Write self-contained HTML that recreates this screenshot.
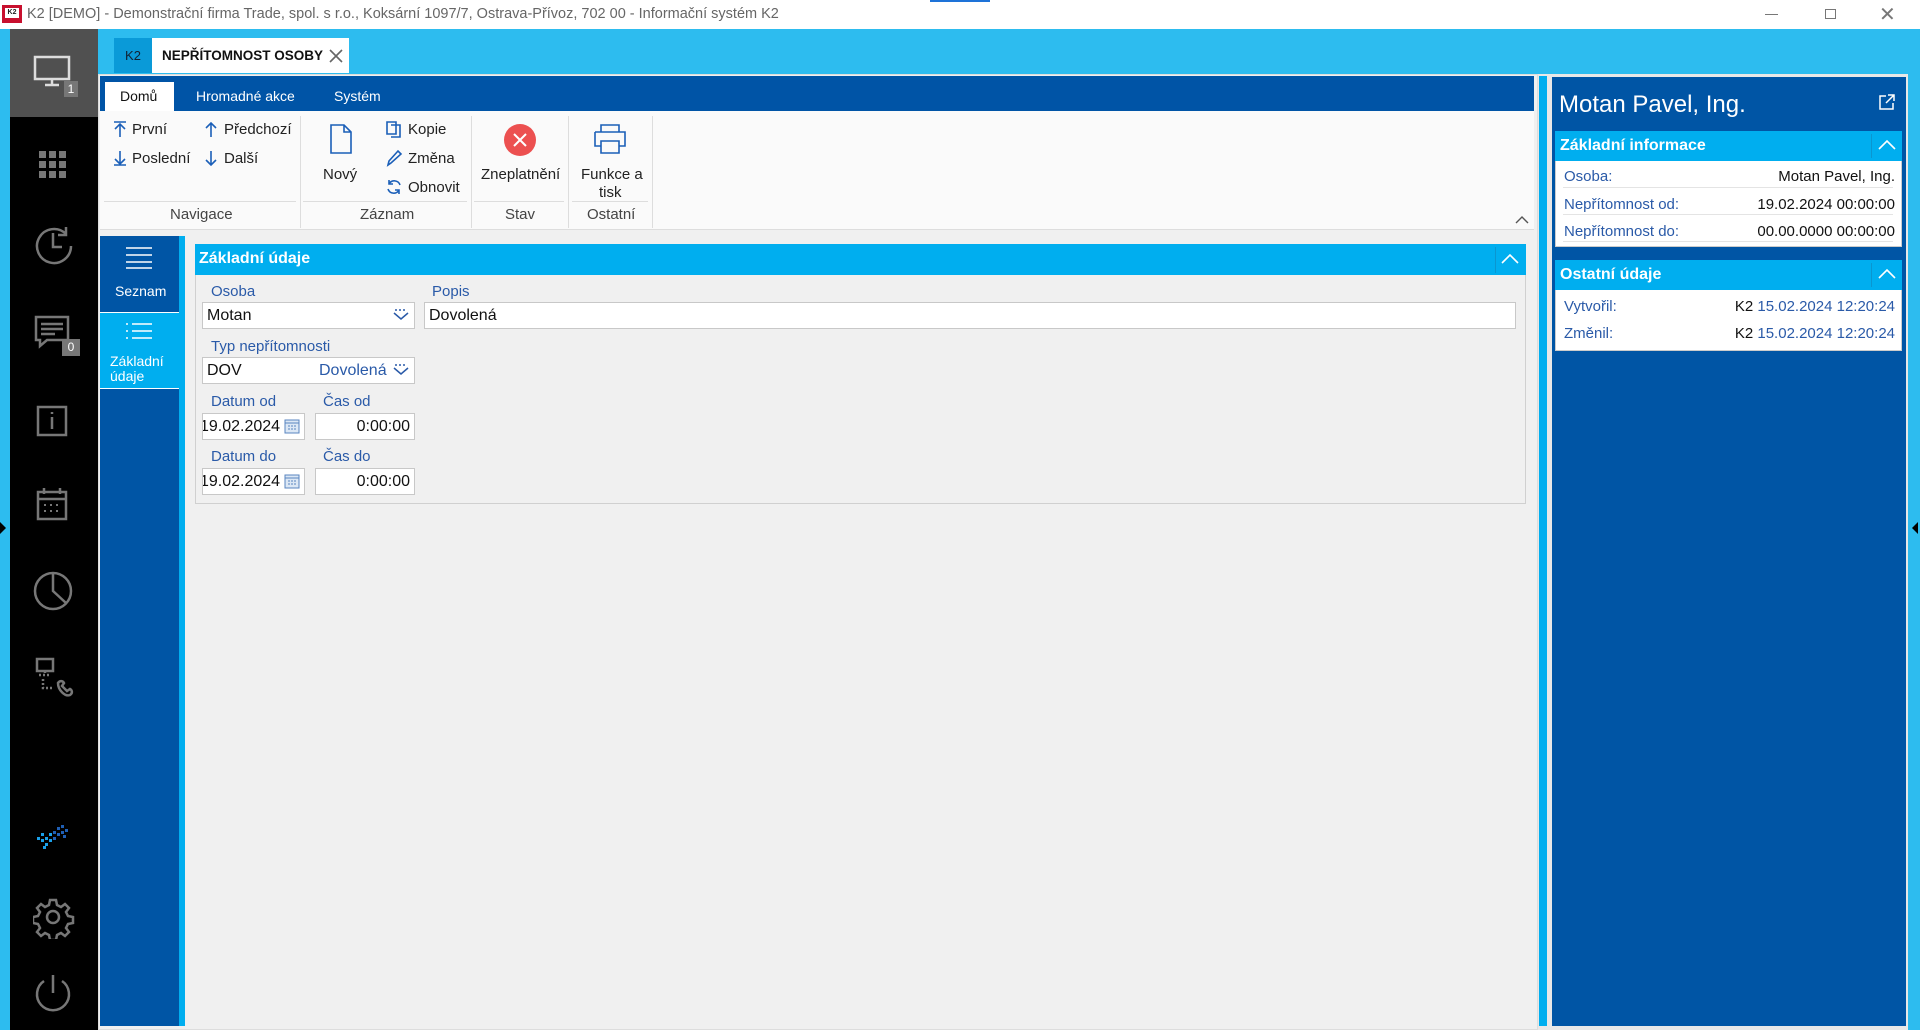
<!DOCTYPE html>
<html><head><meta charset="utf-8">
<style>
*{margin:0;padding:0;box-sizing:border-box}
body{width:1920px;height:1030px;overflow:hidden;background:#2dbcef;font-family:"Liberation Sans","DejaVu Sans",sans-serif;position:relative}
.a{position:absolute}
.t{position:absolute;white-space:nowrap}
.lbl{color:#2a5aa8;font-size:15px}
.inp{position:absolute;background:#fff;border:1px solid #c8c8c8;font-size:16px;color:#111;padding:4px 4px;height:27px;line-height:18px;overflow:hidden}
.rb{font-size:15px;color:#222}
.ico{stroke:#1b5fb8;fill:none;stroke-width:1.6}
.side svg{position:absolute;left:23px}
</style></head><body>
<!-- title bar -->
<div class="a" style="left:0;top:0;width:1920px;height:29px;background:#fff"></div>
<div class="a" style="left:2px;top:5px;width:20px;height:18px;background:#c8102e"></div>
<div class="a" style="left:5px;top:8px;width:14px;height:10px;background:#fff;font-size:7px;font-weight:bold;color:#222;line-height:10px;text-align:center">K2</div>
<div class="t" style="left:27px;top:6px;font-size:14.5px;color:#666">K2 [DEMO] - Demonstrační firma Trade, spol. s r.o., Koksární 1097/7, Ostrava-Přívoz, 702 00 - Informační systém K2</div>
<div class="a" style="left:930px;top:0;width:60px;height:2px;background:#1e73d8"></div>
<div class="a" style="left:1765px;top:14px;width:13px;height:1px;background:#777"></div>
<div class="a" style="left:1825px;top:9px;width:11px;height:10px;border:1px solid #777"></div>
<div class="t" style="left:1879px;top:2px;font-size:20px;color:#777">✕</div>

<!-- left sidebar -->
<div class="a side" style="left:10px;top:29px;width:88px;height:1001px;background:#000">
 <div class="a" style="left:0;top:0;width:88px;height:88px;background:#505050"></div>
 <svg style="top:26px" width="40" height="36" viewBox="0 0 40 36"><rect x="2" y="2" width="34" height="22" fill="none" stroke="#ddd" stroke-width="2.5"/><path d="M19 24v6M12 30h14" stroke="#ddd" stroke-width="2.5"/></svg>
 <div class="a" style="left:54px;top:52px;width:14px;height:16px;background:#777;color:#fff;font-size:12px;text-align:center;line-height:16px">1</div>
 <svg style="top:116px" width="40" height="40" viewBox="0 0 40 40" fill="#777"><rect x="6" y="6" width="7" height="7"/><rect x="16" y="6" width="7" height="7"/><rect x="26" y="6" width="7" height="7"/><rect x="6" y="16" width="7" height="7"/><rect x="16" y="16" width="7" height="7"/><rect x="26" y="16" width="7" height="7"/><rect x="6" y="26" width="7" height="7"/><rect x="16" y="26" width="7" height="7"/><rect x="26" y="26" width="7" height="7"/></svg>
 <svg style="top:195px" width="42" height="42" viewBox="0 0 42 42" fill="none" stroke="#777" stroke-width="2.5"><path d="M33 10A17 17 0 1 0 38 22"/><path d="M20 9v14h9"/><path d="M33 3v8h-8"/></svg>
 <svg style="top:285px" width="42" height="40" viewBox="0 0 42 40" fill="none" stroke="#777" stroke-width="2.5"><path d="M3 3h32v23H14l-7 6v-6H3z"/><path d="M8 10h22M8 15h22M8 20h14"/></svg>
 <div class="a" style="left:52px;top:310px;width:18px;height:17px;background:#777;color:#fff;font-size:12px;text-align:center;line-height:17px">0</div>
 <svg style="top:373px" width="40" height="40" viewBox="0 0 40 40" fill="none" stroke="#777" stroke-width="2.5"><rect x="5" y="5" width="28" height="28"/><path d="M19 15v12M19 10v2"/></svg>
 <svg style="top:456px" width="40" height="40" viewBox="0 0 40 40" fill="none" stroke="#777" stroke-width="2.5"><rect x="5" y="7" width="28" height="27"/><path d="M5 14h28M11 3v6M27 3v6"/><path d="M11 20h2M17 20h2M23 20h2M11 26h2M17 26h2M23 26h2" stroke-width="2"/></svg>
 <svg style="top:540px" width="44" height="44" viewBox="0 0 44 44" fill="none" stroke="#777" stroke-width="2.5"><circle cx="20" cy="22" r="18"/><path d="M20 4v18l13 12"/></svg>
 <svg style="top:627px" width="44" height="44" viewBox="0 0 44 44" fill="none" stroke="#777" stroke-width="2.5"><rect x="4" y="3" width="16" height="12"/><path d="M12 15v4M6 19h12M10 23v9h10" stroke-dasharray="2 2"/><path d="M25 27c2-3 5-2 6 0l-2 3 5 5 3-2c2 1 3 4 0 6-5 2-12-5-12-12z"/></svg>
 <svg style="top:790px" width="44" height="40" viewBox="0 0 44 40"><g fill="#1aa0ea"><rect x="4" y="18" width="3" height="3"/><rect x="8" y="14" width="3" height="3"/><rect x="8" y="20" width="3" height="3"/><rect x="12" y="18" width="3" height="3"/><rect x="12" y="24" width="3" height="3"/><rect x="16" y="14" width="3" height="3"/><rect x="16" y="20" width="3" height="3"/><rect x="10" y="27" width="3" height="3"/></g><g fill="#1f5fb5"><rect x="20" y="12" width="3" height="3"/><rect x="24" y="8" width="3" height="3"/><rect x="24" y="14" width="3" height="3"/><rect x="28" y="6" width="3" height="3"/><rect x="28" y="12" width="3" height="3"/><rect x="32" y="10" width="3" height="3"/><rect x="20" y="18" width="3" height="3"/><rect x="30" y="16" width="3" height="3"/></g></svg>
 <svg style="top:866px" width="44" height="44" viewBox="0 0 44 44" fill="none" stroke="#777" stroke-width="2.5"><circle cx="20" cy="22" r="6"/><path d="M17 5h6l1 5 4 2 4-3 4 4-3 4 2 4 5 1v6l-5 1-2 4 3 4-4 4-4-3-4 2-1 5h-6l-1-5-4-2-4 3-4-4 3-4-2-4-5-1v-6l5-1 2-4-3-4 4-4 4 3 4-2z"/></svg>
 <svg style="top:942px" width="44" height="44" viewBox="0 0 44 44" fill="none" stroke="#777" stroke-width="2.5"><path d="M20 4v18"/><path d="M11 10a16 16 0 1 0 18 0"/></svg>
</div>
<div class="a" style="left:0;top:522px;width:0;height:0;border-top:6px solid transparent;border-bottom:6px solid transparent;border-left:6px solid #000"></div>
<div class="a" style="left:1912px;top:522px;width:0;height:0;border-top:6px solid transparent;border-bottom:6px solid transparent;border-right:6px solid #000"></div>

<!-- tabs -->
<div class="a" style="left:114px;top:38px;width:38px;height:35px;background:#0a9ad8;color:#123;font-size:13px;text-align:center;line-height:35px">K2</div>
<div class="a" style="left:152px;top:38px;width:197px;height:35px;background:#fff"></div>
<div class="t" style="left:162px;top:48px;font-size:13.5px;font-weight:bold;color:#111">NEPŘÍTOMNOST OSOBY</div>
<svg class="a" style="left:329px;top:49px" width="14" height="14"><path d="M1 1l12 12M13 1L1 13" stroke="#666" stroke-width="1.6"/></svg>

<!-- main frame -->
<div class="a" style="left:98px;top:74px;width:1440px;height:956px;background:#f0f0f0;border:1px solid #ddd"></div>
<div class="a" style="left:100px;top:76px;width:1434px;height:35px;background:#0054a6"></div>
<div class="a" style="left:105px;top:82px;width:69px;height:29px;background:#fff"></div>
<div class="t" style="left:120px;top:88px;font-size:14px;color:#111">Domů</div>
<div class="t" style="left:196px;top:88px;font-size:14px;color:#fff">Hromadné akce</div>
<div class="t" style="left:334px;top:88px;font-size:14px;color:#fff">Systém</div>
<div class="a" style="left:100px;top:111px;width:1434px;height:119px;background:#fafafa;border-bottom:1px solid #ddd"></div>
<!-- ribbon -->
<div class="a" style="left:104px;top:201px;width:192px;height:1px;background:#ddd"></div>
<div class="a" style="left:303px;top:201px;width:164px;height:1px;background:#ddd"></div>
<div class="a" style="left:474px;top:201px;width:90px;height:1px;background:#ddd"></div>
<div class="a" style="left:572px;top:201px;width:76px;height:1px;background:#ddd"></div>
<div class="a" style="left:300px;top:116px;width:1px;height:112px;background:#ddd"></div>
<div class="a" style="left:471px;top:116px;width:1px;height:112px;background:#ddd"></div>
<div class="a" style="left:568px;top:116px;width:1px;height:112px;background:#ddd"></div>
<div class="a" style="left:652px;top:116px;width:1px;height:112px;background:#ddd"></div>
<svg class="a" style="left:112px;top:120px" width="16" height="18"><path class="ico" d="M2 2h12M8 4v13M3 9l5-5 5 5"/></svg>
<div class="t rb" style="left:132px;top:121px">První</div>
<svg class="a" style="left:112px;top:149px" width="16" height="18"><path class="ico" d="M2 16h12M8 2v13M3 10l5 5 5-5"/></svg>
<div class="t rb" style="left:132px;top:150px">Poslední</div>
<svg class="a" style="left:203px;top:120px" width="16" height="18"><path class="ico" d="M8 3v14M3 8l5-5 5 5"/></svg>
<div class="t rb" style="left:224px;top:121px">Předchozí</div>
<svg class="a" style="left:203px;top:149px" width="16" height="18"><path class="ico" d="M8 2v14M3 11l5 5 5-5"/></svg>
<div class="t rb" style="left:224px;top:150px">Další</div>
<div class="t rb" style="left:170px;top:206px;color:#444">Navigace</div>
<svg class="a" style="left:328px;top:123px" width="26" height="32"><path class="ico" d="M3 2h13l7 7v21H3z M16 2v7h7" stroke-width="2"/></svg>
<div class="t rb" style="left:323px;top:166px">Nový</div>
<svg class="a" style="left:385px;top:120px" width="18" height="18"><path class="ico" d="M2 2h9v12H2z M6 5h9v12H6"/></svg>
<div class="t rb" style="left:408px;top:121px">Kopie</div>
<svg class="a" style="left:385px;top:149px" width="18" height="18"><path class="ico" d="M3 16l1-4 9-10 3 3-10 9z"/></svg>
<div class="t rb" style="left:408px;top:150px">Změna</div>
<svg class="a" style="left:385px;top:178px" width="18" height="18"><path class="ico" d="M15 7A6 6 0 0 0 4 6M3 11a6 6 0 0 0 11 1M4 2v4h4M14 16v-4h-4"/></svg>
<div class="t rb" style="left:408px;top:179px">Obnovit</div>
<div class="t rb" style="left:360px;top:206px;color:#444">Záznam</div>
<svg class="a" style="left:503px;top:123px" width="34" height="34"><circle cx="17" cy="17" r="16" fill="#ec5050"/><path d="M11 11l12 12M23 11l-12 12" stroke="#fff" stroke-width="2"/></svg>
<div class="t rb" style="left:481px;top:166px">Zneplatnění</div>
<div class="t rb" style="left:505px;top:206px;color:#444">Stav</div>
<svg class="a" style="left:592px;top:123px" width="36" height="32"><path class="ico" stroke-width="2.2" d="M9 9V2h18v7M3 9h30v14h-6M9 23H3V9M9 18h18v12H9z"/></svg>
<div class="t rb" style="left:581px;top:166px">Funkce a</div>
<div class="t rb" style="left:599px;top:184px">tisk</div>
<div class="t rb" style="left:587px;top:206px;color:#444">Ostatní</div>
<svg class="a" style="left:1515px;top:215px" width="14" height="9"><path d="M1 8l6-6 6 6" stroke="#555" stroke-width="1.4" fill="none"/></svg>

<!-- left nav -->
<div class="a" style="left:100px;top:236px;width:79px;height:790px;background:#0055a5"></div>
<div class="a" style="left:179px;top:236px;width:6px;height:790px;background:#00aeef"></div>
<svg class="a" style="left:125px;top:246px" width="28" height="24"><path d="M1 2h26M1 9h26M1 16h26M1 22h26" stroke="#fff" stroke-width="1.5"/></svg>
<div class="t" style="left:115px;top:283px;font-size:14px;color:#fff">Seznam</div>
<div class="a" style="left:100px;top:312px;width:79px;height:77px;background:#00aeef;border-top:1px solid #fff;border-bottom:1px solid #fff"></div>
<svg class="a" style="left:125px;top:322px" width="28" height="18"><path d="M1 2h2M1 9h2M1 16h2M7 2h20M7 9h20M7 16h20" stroke="#fff" stroke-width="1.5"/></svg>
<div class="t" style="left:110px;top:354px;font-size:14px;color:#fff;line-height:15px">Základní<br>údaje</div>

<!-- content -->
<div class="a" style="left:195px;top:244px;width:1331px;height:260px;border:1px solid #d0d0d0;background:#f0f0f0"></div>
<div class="a" style="left:195px;top:244px;width:1331px;height:31px;background:#00aeef"></div>
<div class="t" style="left:199px;top:250px;font-size:16px;font-weight:bold;color:#fff">Základní údaje</div>
<div class="a" style="left:1495px;top:247px;width:1px;height:26px;background:#0a96d0"></div>
<svg class="a" style="left:1500px;top:252px" width="20" height="14"><path d="M2 11l8-8 8 8" stroke="#fff" stroke-width="1.6" fill="none"/></svg>
<div class="t lbl" style="left:211px;top:283px">Osoba</div>
<div class="inp" style="left:202px;top:302px;width:213px">Motan</div>
<svg class="a" style="left:393px;top:309px" width="16" height="12"><path d="M2 1h2M6 1h2M10 1h2M1 4l7 6 7-6" stroke="#2a5aa8" stroke-width="1.5" fill="none"/></svg>
<div class="t lbl" style="left:432px;top:283px">Popis</div>
<div class="inp" style="left:424px;top:302px;width:1092px">Dovolená</div>
<div class="t lbl" style="left:211px;top:338px">Typ nepřítomnosti</div>
<div class="inp" style="left:202px;top:357px;width:213px">DOV<span style="position:absolute;left:116px;color:#2a5aa8">Dovolená</span></div>
<svg class="a" style="left:393px;top:364px" width="16" height="12"><path d="M2 1h2M6 1h2M10 1h2M1 4l7 6 7-6" stroke="#2a5aa8" stroke-width="1.5" fill="none"/></svg>
<div class="t lbl" style="left:211px;top:393px">Datum od</div>
<div class="t lbl" style="left:323px;top:393px">Čas od</div>
<div class="inp" style="left:202px;top:413px;width:103px;text-indent:-7px">19.02.2024</div>
<div class="inp" style="left:315px;top:413px;width:100px;text-align:right">0:00:00</div>
<div class="t lbl" style="left:211px;top:448px">Datum do</div>
<div class="t lbl" style="left:323px;top:448px">Čas do</div>
<div class="inp" style="left:202px;top:468px;width:103px;text-indent:-7px">19.02.2024</div>
<div class="inp" style="left:315px;top:468px;width:100px;text-align:right">0:00:00</div>
<svg class="a" style="left:284px;top:418px" width="16" height="16"><rect x="0" y="0" width="16" height="16" fill="#fff"/><rect x="1" y="2" width="14" height="13" fill="#dbe7f5" stroke="#5a85c0"/><path d="M1 5h14" stroke="#5a85c0"/><path d="M4 8h2M7 8h2M10 8h2M4 11h2M7 11h2M10 11h2" stroke="#5a85c0"/></svg>
<svg class="a" style="left:284px;top:473px" width="16" height="16"><rect x="0" y="0" width="16" height="16" fill="#fff"/><rect x="1" y="2" width="14" height="13" fill="#dbe7f5" stroke="#5a85c0"/><path d="M1 5h14" stroke="#5a85c0"/><path d="M4 8h2M7 8h2M10 8h2M4 11h2M7 11h2M10 11h2" stroke="#5a85c0"/></svg>

<!-- splitter -->
<div class="a" style="left:1538px;top:74px;width:12px;height:956px;background:#e8e8e8"></div>
<div class="a" style="left:1539px;top:76px;width:8px;height:950px;background:#00aeef"></div>

<!-- right panel -->
<div class="a" style="left:1550px;top:74px;width:358px;height:956px;background:#e8e8e8"></div>
<div class="a" style="left:1552px;top:77px;width:354px;height:949px;background:#0055a5"></div>
<div class="t" style="left:1559px;top:91px;font-size:24px;color:#fff">Motan Pavel, Ing.</div>
<svg class="a" style="left:1878px;top:93px" width="18" height="18"><path d="M8 3H2v13h13v-6M10 2h6v6M16 2l-8 8" stroke="#fff" stroke-width="1.5" fill="none"/></svg>
<div class="a" style="left:1555px;top:131px;width:347px;height:116px;background:#fff;border:1px solid #ccc"></div>
<div class="a" style="left:1555px;top:131px;width:347px;height:30px;background:#00aeef"></div>
<div class="t" style="left:1560px;top:137px;font-size:16px;font-weight:bold;color:#fff">Základní informace</div>
<div class="a" style="left:1871px;top:134px;width:1px;height:24px;background:#0a96d0"></div>
<svg class="a" style="left:1877px;top:139px" width="20" height="12"><path d="M2 10l8-8 8 8" stroke="#fff" stroke-width="1.6" fill="none"/></svg>
<div class="t lbl" style="left:1564px;top:168px">Osoba:</div><div class="t" style="right:25px;top:168px;font-size:15px;color:#111">Motan Pavel, Ing.</div>
<div class="a" style="left:1563px;top:187px;width:330px;height:1px;background:#e4e4e4"></div>
<div class="t lbl" style="left:1564px;top:196px">Nepřítomnost od:</div><div class="t" style="right:25px;top:196px;font-size:15px;color:#111">19.02.2024 00:00:00</div>
<div class="a" style="left:1563px;top:214px;width:330px;height:1px;background:#e4e4e4"></div>
<div class="t lbl" style="left:1564px;top:223px">Nepřítomnost do:</div><div class="t" style="right:25px;top:223px;font-size:15px;color:#111">00.00.0000 00:00:00</div>
<div class="a" style="left:1563px;top:241px;width:330px;height:1px;background:#e4e4e4"></div>

<div class="a" style="left:1555px;top:260px;width:347px;height:91px;background:#fff;border:1px solid #ccc"></div>
<div class="a" style="left:1555px;top:260px;width:347px;height:30px;background:#00aeef"></div>
<div class="t" style="left:1560px;top:266px;font-size:16px;font-weight:bold;color:#fff">Ostatní údaje</div>
<div class="a" style="left:1871px;top:263px;width:1px;height:24px;background:#0a96d0"></div>
<svg class="a" style="left:1877px;top:268px" width="20" height="12"><path d="M2 10l8-8 8 8" stroke="#fff" stroke-width="1.6" fill="none"/></svg>
<div class="t lbl" style="left:1564px;top:298px">Vytvořil:</div><div class="t" style="right:25px;top:298px;font-size:15px;color:#2a5aa8"><span style="color:#111">K2</span> 15.02.2024 12:20:24</div>
<div class="t lbl" style="left:1564px;top:325px">Změnil:</div><div class="t" style="right:25px;top:325px;font-size:15px;color:#2a5aa8"><span style="color:#111">K2</span> 15.02.2024 12:20:24</div>
</body></html>
